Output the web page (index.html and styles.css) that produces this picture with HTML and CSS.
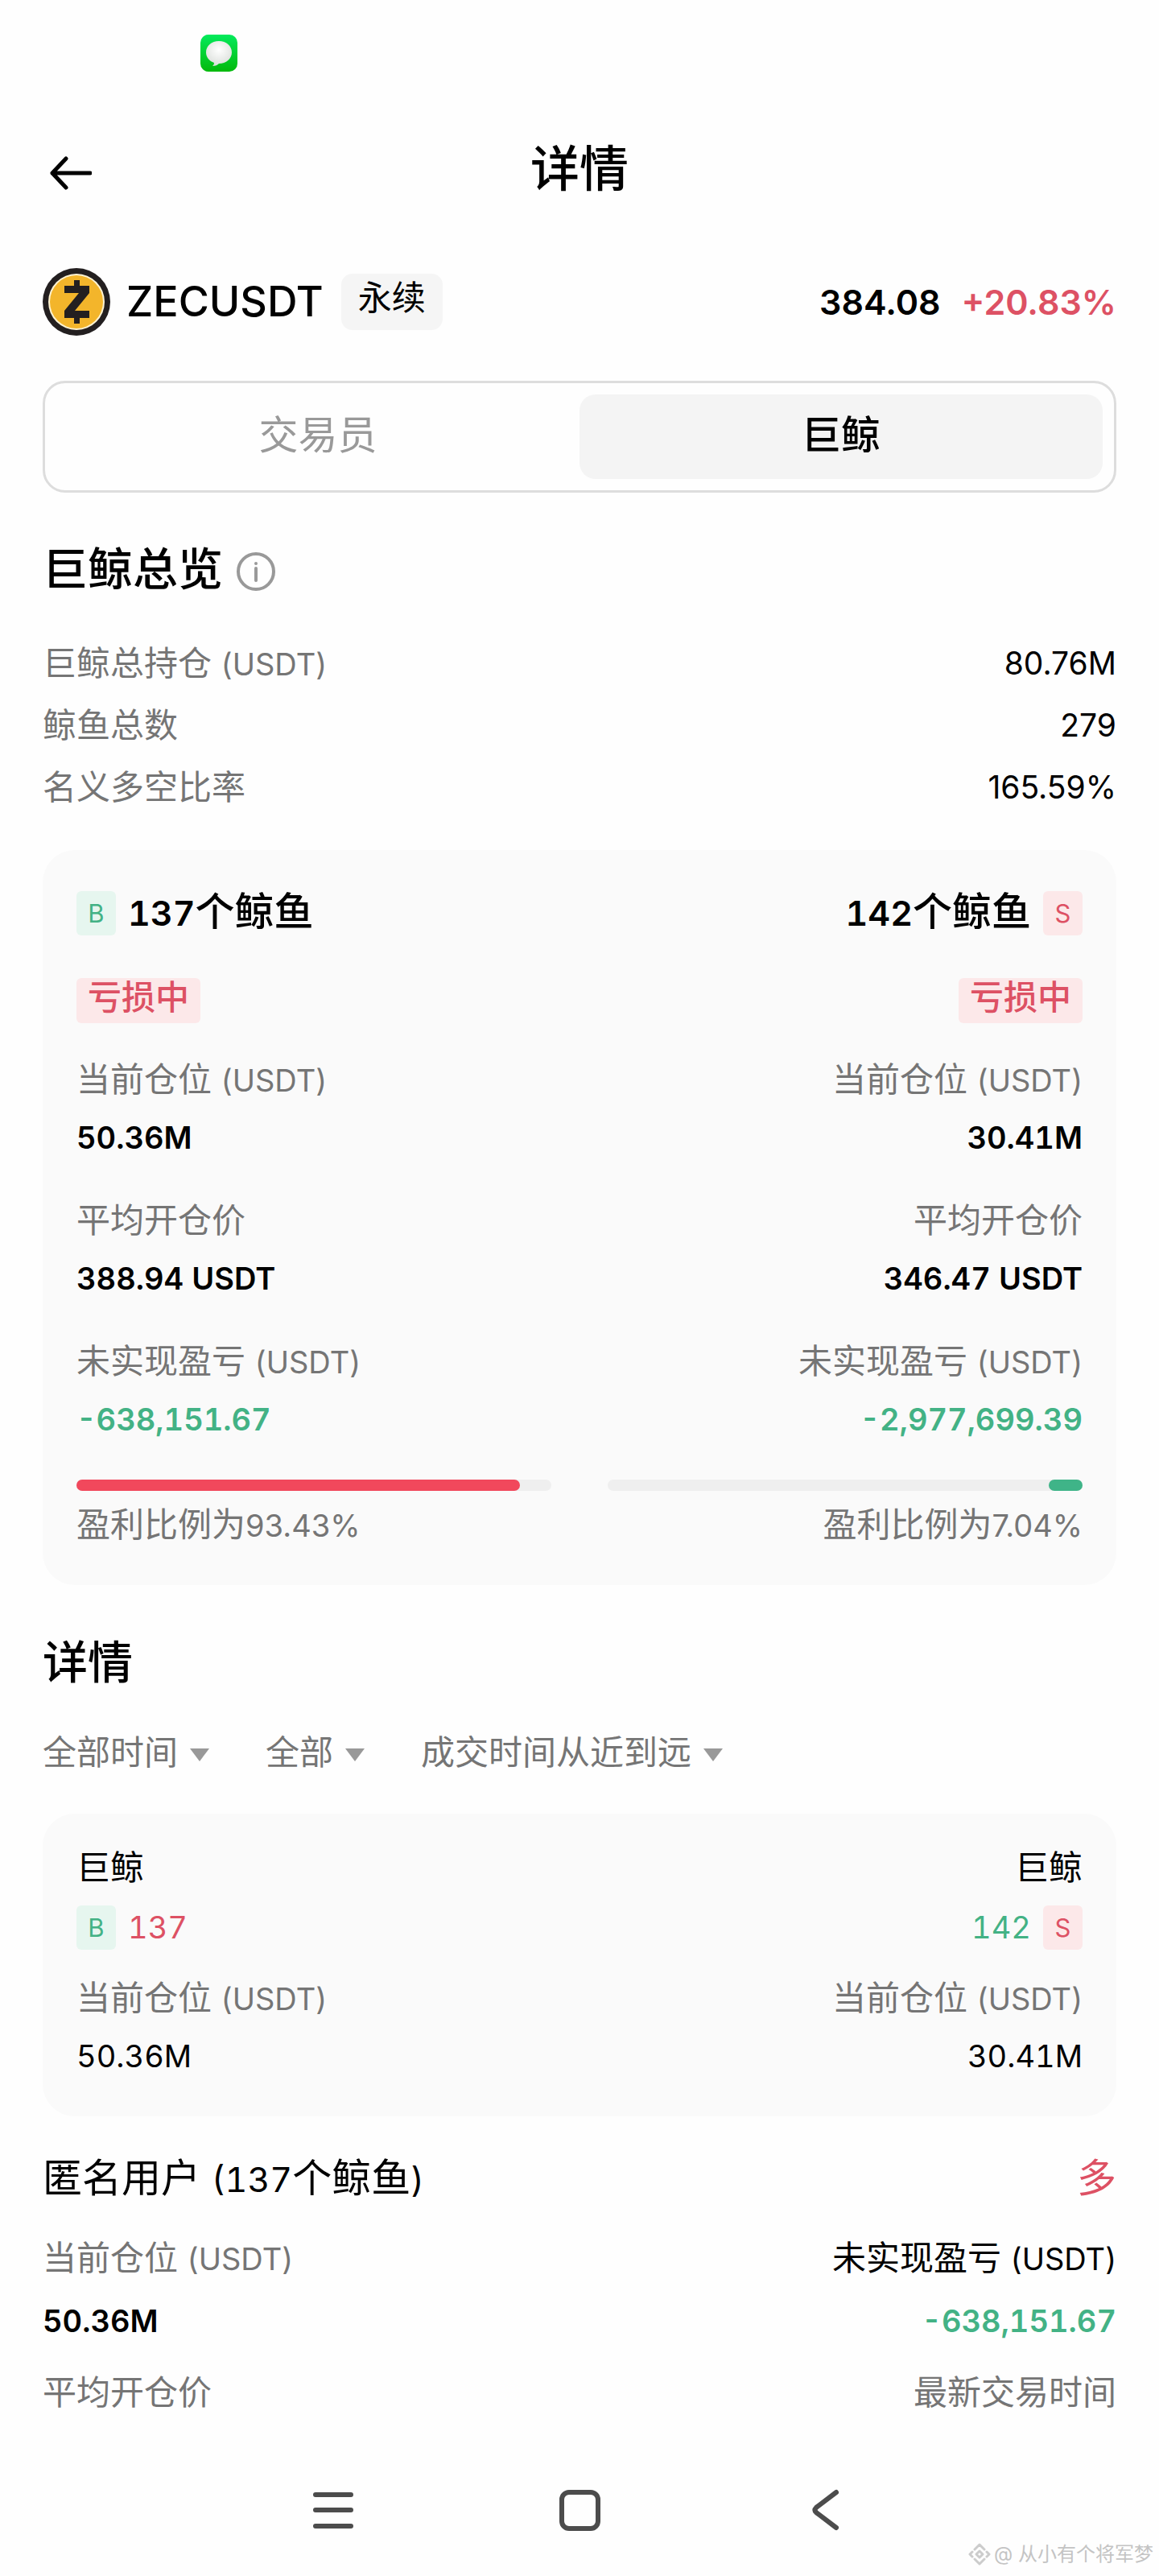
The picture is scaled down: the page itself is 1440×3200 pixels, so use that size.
FILE: index.html
```html
<!DOCTYPE html>
<html lang="zh-CN">
<head>
    <meta charset="UTF-8">
    <meta name="viewport" content="width=device-width, initial-scale=1.0">
    <title>详情</title>
    <link rel="stylesheet" href="styles.css">
</head>
<body>

    <div class="status-bar">
        <svg class="message-icon" viewBox="0 0 46 46">
            <defs>
                <linearGradient id="green" x1="0" y1="0" x2="0" y2="1">
                    <stop offset="0" stop-color="#04ea5c"/>
                    <stop offset="1" stop-color="#03b90c"/>
                </linearGradient>
                <radialGradient id="bubble" cx="0.5" cy="0.35" r="0.7">
                    <stop offset="0" stop-color="#ffffff"/>
                    <stop offset="1" stop-color="#d8dcd8"/>
                </radialGradient>
            </defs>
            <rect width="46" height="46" rx="10" fill="url(#green)"/>
            <path d="M23 8C14 8 7 14 7 22c0 6 4 11 10 13 0 2-1 3-2 4 4 0 6-1 8-3 9 0 16-6 16-14S32 8 23 8z" fill="url(#bubble)"/>
        </svg>
    </div>

    <header class="top-bar">
        <button type="button" class="back" aria-label="返回">
            <svg viewBox="0 0 52 42"><path d="M20 3L3 21l17 18M3 21h47"/></svg>
        </button>
        <h1>详情</h1>
    </header>

    <main class="content">

        <div class="symbol-row">
            <svg class="coin" viewBox="0 0 84 84">
                <circle cx="42" cy="42" r="42" fill="#231f20"/>
                <circle cx="42" cy="42" r="35" fill="#fdf3d3"/>
                <circle cx="42" cy="42" r="33" fill="#f3b52b"/>
                <path d="M39 15h7v7h12v9L40 53h18v9H46v7h-7v-7H27v-9l18-22H27v-9h12z" fill="#231f20"/>
            </svg>
            <span class="symbol">ZECUSDT</span>
            <span class="contract">永续</span>
            <span class="price">384.08</span>
            <span class="change red">+20.83%</span>
        </div>

        <div class="tabs">
            <button type="button" class="tab">交易员</button>
            <button type="button" class="tab active">巨鲸</button>
        </div>

        <div class="section-head">
            <h2>巨鲸总览</h2>
            <svg class="info" viewBox="0 0 50 50">
                <circle cx="25" cy="25" r="22"/>
                <path d="M25 21v15"/>
                <circle class="dot" cx="25" cy="15" r="2"/>
            </svg>
        </div>

        <dl class="overview">
            <div><dt>巨鲸总持仓 <span class="num">(USDT)</span></dt><dd>80.76M</dd></div>
            <div><dt>鲸鱼总数</dt><dd>279</dd></div>
            <div><dt>名义多空比率</dt><dd>165.59%</dd></div>
        </dl>

        <section class="card sides">
            <div class="side">
                <div class="side-head">
                    <span class="badge buy">B</span>
                    <span class="count"><span class="digits">137</span>个鲸鱼</span>
                </div>
                <span class="tag">亏损中</span>
                <dl class="stats">
                    <div><dt>当前仓位 <span class="num">(USDT)</span></dt><dd>50.36M</dd></div>
                    <div><dt>平均开仓价</dt><dd>388.94 USDT</dd></div>
                    <div><dt>未实现盈亏 <span class="num">(USDT)</span></dt><dd class="green">-638,151.67</dd></div>
                </dl>
                <div class="bar"><div class="fill fill-red" style="width: 93.43%"></div></div>
                <p class="ratio">盈利比例为<span class="num">93.43%</span></p>
            </div>
            <div class="side right">
                <div class="side-head">
                    <span class="count"><span class="digits">142</span>个鲸鱼</span>
                    <span class="badge sell">S</span>
                </div>
                <span class="tag">亏损中</span>
                <dl class="stats">
                    <div><dt>当前仓位 <span class="num">(USDT)</span></dt><dd>30.41M</dd></div>
                    <div><dt>平均开仓价</dt><dd>346.47 USDT</dd></div>
                    <div><dt>未实现盈亏 <span class="num">(USDT)</span></dt><dd class="green">-2,977,699.39</dd></div>
                </dl>
                <div class="bar"><div class="fill fill-green" style="width: 7.04%"></div></div>
                <p class="ratio">盈利比例为<span class="num">7.04%</span></p>
            </div>
        </section>

        <h2 class="detail-title">详情</h2>

        <div class="filters">
            <label class="filter"><select aria-label="时间"><option>全部时间</option></select></label>
            <label class="filter"><select aria-label="类型"><option>全部</option></select></label>
            <label class="filter"><select aria-label="排序"><option>成交时间从近到远</option></select></label>
        </div>

        <section class="card totals">
            <div class="side">
                <p class="whale">巨鲸</p>
                <div class="side-head">
                    <span class="badge buy">B</span>
                    <span class="total red">137</span>
                </div>
                <dl class="stats light">
                    <div><dt>当前仓位 <span class="num">(USDT)</span></dt><dd>50.36M</dd></div>
                </dl>
            </div>
            <div class="side right">
                <p class="whale">巨鲸</p>
                <div class="side-head">
                    <span class="total green">142</span>
                    <span class="badge sell">S</span>
                </div>
                <dl class="stats light">
                    <div><dt>当前仓位 <span class="num">(USDT)</span></dt><dd>30.41M</dd></div>
                </dl>
            </div>
        </section>

        <section class="user">
            <div class="user-head">
                <h3>匿名用户 <span class="digits">(137</span>个鲸鱼<span class="digits">)</span></h3>
                <span class="red">多</span>
            </div>
            <dl class="user-stats">
                <div><dt>当前仓位 <span class="num">(USDT)</span></dt><dd>50.36M</dd></div>
                <div class="right"><dt class="dark">未实现盈亏 <span class="num">(USDT)</span></dt><dd class="green">-638,151.67</dd></div>
                <div><dt>平均开仓价</dt></div>
                <div class="right"><dt>最新交易时间</dt></div>
            </dl>
        </section>

    </main>

    <nav class="system-nav">
        <button type="button" aria-label="菜单">
            <svg viewBox="0 0 52 52"><path d="M4 7h44M4 26h44M4 46h44"/></svg>
        </button>
        <button type="button" aria-label="主页">
            <svg viewBox="0 0 52 52"><rect x="4" y="4" width="45" height="45" rx="9"/></svg>
        </button>
        <button type="button" aria-label="后退">
            <svg viewBox="0 0 52 52"><path d="M39 4L14 23q-3 3 0 6l25 19"/></svg>
        </button>
    </nav>

    <footer class="watermark">
        <svg viewBox="0 0 28 28">
            <path d="M8 8l6-6 6 6M8 20l6 6 6-6M5 11l-3 3 3 3M23 11l3 3-3 3"/>
            <path d="M14 10l4 4-4 4-4-4z"/>
        </svg>
        <span>@ 从小有个将军梦</span>
    </footer>

</body>
</html>
```
FILE: styles.css
```css
* {
    box-sizing: border-box;
}

body {
    margin: 0;
    background-color: #fefefe;
    color: #000;
    font-family: Inter, "Noto Sans CJK SC", sans-serif;
    font-size: 42px;
    line-height: 60px;
}

h1, h2, h3, p, dl, dd {
    margin: 0;
}

button, select {
    font: inherit;
    color: inherit;
    background: none;
    border: none;
    padding: 0;
    cursor: pointer;
}

svg {
    display: block;
    fill: none;
    stroke-linecap: round;
    stroke-linejoin: round;
}

/* line-height 1 so the smaller digits do not make the line taller */
.num {
    font-size: 38px;
    line-height: 1;
}

.digits {
    font-size: 43px;
    font-variant-numeric: tabular-nums;
    line-height: 1;
}

.red {
    color: #dd5164;
}

.green {
    color: #43b285;
}

/* top of the screen */
.status-bar {
    height: 134px;
    padding: 43px 249px 0;
}

.message-icon {
    width: 46px;
    height: 46px;
}

.top-bar {
    display: grid;
    grid-template-columns: 120px 1fr 120px;
    align-items: center;
    height: 152px;
}

.back {
    padding: 10px 0 0 62px;
}

.back svg {
    width: 52px;
    height: 42px;
    stroke: #000;
    stroke-width: 5;
}

h1 {
    text-align: center;
    font-size: 61px;
    font-weight: 500;
    line-height: 90px;
}

.content {
    padding: 47px 53px 0;
}

.symbol-row {
    display: flex;
    align-items: center;
    font-weight: 500;
}

.coin {
    width: 84px;
    height: 84px;
}

.symbol {
    margin-left: 20px;
    font-size: 52px;
}

.contract {
    margin-left: 22px;
    padding: 0 21px 10px;
    border-radius: 14px;
    background-color: #f5f5f5;
    font-weight: 400;
}

.price {
    margin-left: auto;
    font-size: 43px;
    font-weight: 600;
}

.change {
    margin-left: 26px;
    font-size: 43px;
    font-weight: 600;
}

/* tabs */
.tabs {
    display: grid;
    grid-template-columns: 1fr 1fr;
    margin-top: 56px;
    padding: 14px;
    border: 3px solid #dddddd;
    border-radius: 28px;
}

.tab {
    height: 105px;
    padding-bottom: 4px;
    border-radius: 20px;
    color: #999999;
    font-size: 49px;
}

.tab.active {
    background-color: #f4f4f4;
    color: #000;
    font-weight: 500;
}

.section-head {
    display: flex;
    align-items: center;
    gap: 16px;
    margin-top: 65px;
}

h2 {
    font-size: 56px;
    font-weight: 500;
}

.info {
    width: 50px;
    height: 50px;
    margin-top: 6px;
    stroke: #999999;
    stroke-width: 4;
}

.info .dot {
    fill: #999999;
    stroke: none;
}

.overview {
    margin-top: 48px;
    line-height: 77px;
}

.overview div {
    display: flex;
    justify-content: space-between;
}

.overview dd {
    font-size: 39px;
}

dt {
    color: #757575;
}

/* cards */
.card {
    display: grid;
    grid-template-columns: 1fr 1fr;
    column-gap: 70px;
    border-radius: 40px;
    background-color: #fafafa;
}

.sides {
    margin-top: 40px;
    padding: 51px 42px 45px;
}

.side {
    display: flex;
    flex-direction: column;
    align-items: flex-start;
}

.side.right {
    align-items: flex-end;
}

.right {
    text-align: right;
}

.side-head {
    display: flex;
    gap: 15px;
}

.badge {
    width: 49px;
    border-radius: 6px;
    font-size: 31px;
    line-height: 55px;
    text-align: center;
}

.buy {
    background-color: #e6f6ef;
    color: #43b285;
}

.sell {
    background-color: #fce8e9;
    color: #dd5164;
}

.count {
    font-size: 49px;
    font-weight: 500;
    line-height: 52px;
}

.count .digits {
    font-weight: 600;
}

.tag {
    margin-top: 53px;
    padding: 0 14px 8px;
    border-radius: 6px;
    background-color: #fce8e9;
    color: #dd5164;
    font-weight: 500;
    line-height: 48px;
}

.stats {
    display: grid;
    row-gap: 31px;
    margin-top: 34px;
    line-height: 72px;
}

.stats dd, .user-stats dd {
    font-size: 38px;
    font-weight: 600;
    font-variant-numeric: tabular-nums;
}

.stats.light dd {
    font-size: 38px;
    font-weight: 400;
}

.bar {
    display: flex;
    width: 100%;
    height: 14px;
    margin-top: 39px;
    border-radius: 7px;
    background-color: #efefef;
}

.right .bar {
    justify-content: flex-end;
}

.fill {
    border-radius: 7px;
}

.fill-red {
    background-color: #f1485c;
}

.fill-green {
    background-color: #3fb488;
}

.ratio {
    margin-top: 12px;
    color: #757575;
}

.detail-title {
    margin-top: 66px;
}

.filters {
    display: flex;
    gap: 70px;
    margin-top: 52px;
    color: #757575;
}

.filter {
    display: flex;
    align-items: center;
    gap: 14px;
}

.filter select {
    appearance: none;
    height: 60px;
}

.filter::after {
    content: "";
    margin-top: 6px;
    border: 12px solid transparent;
    border-top: 16px solid #999999;
    border-bottom: none;
}

.totals {
    margin-top: 46px;
    padding: 37px 42px 39px;
}

.totals .side-head {
    margin-top: 17px;
}

.total {
    font-size: 38px;
    font-variant-numeric: tabular-nums;
    line-height: 55px;
}

.totals .stats {
    margin-top: 24px;
}

/* user list */
.user {
    margin-top: 47px;
}

.user-head {
    display: flex;
    justify-content: space-between;
    font-size: 49px;
}

h3 {
    font-size: 49px;
    font-weight: 400;
}

.user-stats {
    display: grid;
    grid-template-columns: 1fr 1fr;
    row-gap: 17px;
    margin-top: 33px;
    line-height: 72px;
}

.user-stats dd {
    margin-top: 6px;
}

.user-stats .dark {
    color: #000;
}

.system-nav {
    display: flex;
    max-width: 918px;
    margin: 70px auto 0;
}

.system-nav button {
    flex: 1;
    height: 80px;
}

.system-nav svg {
    width: 52px;
    height: 52px;
    margin: 0 auto;
    stroke: #4c4c4c;
    stroke-width: 6;
}

.watermark {
    display: flex;
    justify-content: flex-end;
    align-items: center;
    gap: 4px;
    padding-right: 7px;
    color: #c4c4c4;
    font-size: 24px;
    line-height: 30px;
}

.watermark svg {
    width: 28px;
    height: 28px;
    stroke: #cccccc;
    stroke-width: 3;
}
```
